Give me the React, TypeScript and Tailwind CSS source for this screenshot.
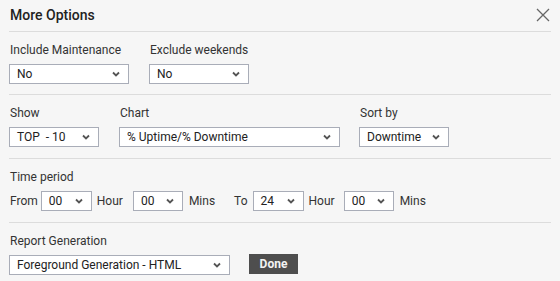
import React from "react";

type SelectProps = {
  value: string;
  width: string;
};

const Chevron = () => (
  <svg width="8" height="6" viewBox="0 0 8 6" className="shrink-0">
    <path d="M1 1.5 L4 4.5 L7 1.5" fill="none" stroke="#555" strokeWidth="1.8" />
  </svg>
);

const Select = ({ value, width }: SelectProps): React.ReactElement => (
  <div
    className={`${width} h-[20px] shrink-0 flex items-center justify-between bg-white border border-[#a9adb8] pl-[7px] pr-[8px] text-[12px] text-[#222]`}
  >
    <span className="leading-none whitespace-pre">{value}</span>
    <Chevron />
  </div>
);

const Field = ({
  label,
  children,
}: {
  label: string;
  children: React.ReactNode;
}) => (
  <div className="flex flex-col">
    <div className="h-[16px] leading-[16px] text-[12px] text-[#333] pl-[1px]">{label}</div>
    <div className="mt-[6px]">{children}</div>
  </div>
);

const Section = ({ children, last }: { children: React.ReactNode; last?: string }) => (
  <div className={`border-t border-[#dcdcdc] pt-[10px] ${last ?? "pb-[11px]"}`}>{children}</div>
);

export default function App(): React.ReactElement {
  return (
    <div
      className="w-[560px] h-[281px] bg-[#f6f6f6] px-[9px] overflow-hidden"
      style={{ fontFamily: "Roboto, 'Liberation Sans', sans-serif" }}
    >
      <div className="h-[31px] flex items-center justify-between">
        <h1 className="pl-[1px] text-[14px] font-medium text-[#222]">More Options</h1>
        <svg width="14" height="14" viewBox="0 0 14 14" className="mr-[1px] mt-[-2px]">
          <path d="M1 1 L13 13 M13 1 L1 13" stroke="#666" strokeWidth="1.3" />
        </svg>
      </div>

      <Section last="pb-[10px]">
        <div className="flex gap-[20px]">
          <Field label="Include Maintenance">
            <Select value="No" width="w-[120px]" />
          </Field>
          <Field label="Exclude weekends">
            <Select value="No" width="w-[100px]" />
          </Field>
        </div>
      </Section>

      <Section>
        <div className="flex">
          <Field label="Show">
            <Select value="TOP  - 10" width="w-[90px]" />
          </Field>
          <div className="ml-[20px]">
            <Field label="Chart">
              <Select value="% Uptime/% Downtime" width="w-[221px]" />
            </Field>
          </div>
          <div className="ml-[19px]">
            <Field label="Sort by">
              <Select value="Downtime" width="w-[90px]" />
            </Field>
          </div>
        </div>
      </Section>

      <Section>
        <div className="h-[16px] leading-[16px] text-[12px] text-[#333] pl-[1px]">Time period</div>
        <div className="mt-[6px] flex items-center text-[12px] text-[#333]">
          <span className="pl-[1px]">From</span>
          <div className="ml-[3px]">
            <Select value="00" width="w-[51px]" />
          </div>
          <span className="ml-[5px]">Hour</span>
          <div className="ml-[10px]">
            <Select value="00" width="w-[50px]" />
          </div>
          <span className="ml-[6px]">Mins</span>
          <span className="ml-[19px]">To</span>
          <div className="ml-[5px]">
            <Select value="24" width="w-[51px]" />
          </div>
          <span className="ml-[5px]">Hour</span>
          <div className="ml-[9px]">
            <Select value="00" width="w-[50px]" />
          </div>
          <span className="ml-[6px]">Mins</span>
        </div>
      </Section>

      <Section>
        <div className="flex items-end gap-[19px]">
          <Field label="Report Generation">
            <Select value="Foreground Generation - HTML" width="w-[221px]" />
          </Field>
          <button className="h-[20px] w-[49px] mb-[1px] bg-[#4e4e4e] text-[#f2f2f2] text-[12px] font-bold">
            Done
          </button>
        </div>
      </Section>
    </div>
  );
}
